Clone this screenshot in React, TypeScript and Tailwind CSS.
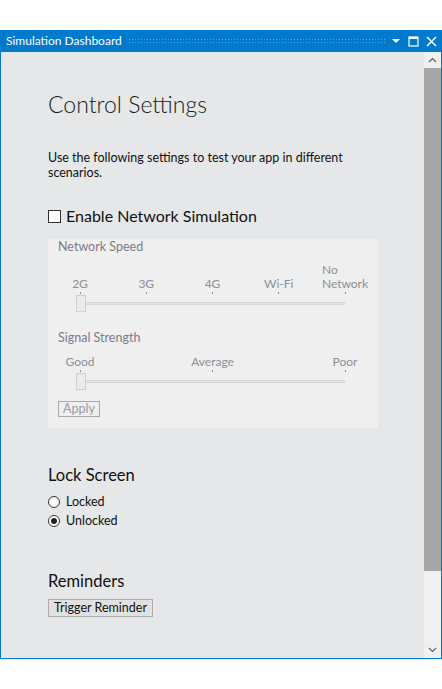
import React from 'react';

const font = { fontFamily: 'Lato, "Noto Sans", sans-serif' };

function TitleBar() {
  return (
    <div className="flex h-[22px] items-center bg-[#007acc] pl-[5px] pr-[4px] text-white">
      <span className="text-[12px] leading-none">Simulation Dashboard</span>
      <div className="mx-[6px] h-[6px] flex-1 bg-[radial-gradient(circle,#5aa9e6_0.7px,transparent_0.8px)] bg-[length:3px_3px]" />
      <div className="flex items-center gap-[7px]">
        <svg width="10" height="10" viewBox="0 0 10 10">
          <path d="M1 3h8L5 7z" fill="white" />
        </svg>
        <svg width="11" height="11" viewBox="0 0 11 11">
          <rect x="1" y="1" width="9" height="9" fill="none" stroke="white" strokeWidth="1.2" />
          <rect x="1" y="1" width="9" height="2" fill="white" />
        </svg>
        <svg width="11" height="11" viewBox="0 0 11 11">
          <path d="M1 1l9 9M10 1l-9 9" stroke="white" strokeWidth="1.5" />
        </svg>
      </div>
    </div>
  );
}

function Slider({ labels }: { labels: React.ReactNode[] }) {
  return (
    <div className="ml-[22px] w-[265px]">
      <div className="flex items-end justify-between">
        {labels.map((l, i) => (
          <div key={i} className="flex w-0 flex-col items-center">
            <div className="whitespace-nowrap text-[12px] leading-[14px] text-[#8e8e98]">{l}</div>
            <div className="mt-[1px] h-[2px] w-[1px] bg-[#8e8e98]" />
          </div>
        ))}
      </div>
      <div className="relative mt-[8px] h-[3px] border border-[#d8d8d8] bg-[#e4e4e4]">
        <div className="absolute left-[-5px] top-[-8px] h-[17px] w-[10px] border border-[#cfcfcf] bg-[#ebebeb]" />
      </div>
    </div>
  );
}

function Scrollbar() {
  return (
    <div className="flex w-[17px] flex-col bg-[#f0f0f0]">
      <div className="flex h-[16px] items-center justify-center">
        <svg width="9" height="6" viewBox="0 0 9 6">
          <path d="M1 5l3.5-3.5L8 5" fill="none" stroke="#606060" strokeWidth="1.2" />
        </svg>
      </div>
      <div className="h-[503px] bg-[#a6a6a6]" />
      <div className="flex-1" />
      <div className="flex h-[16px] items-center justify-center">
        <svg width="9" height="6" viewBox="0 0 9 6">
          <path d="M1 1l3.5 3.5L8 1" fill="none" stroke="#606060" strokeWidth="1.2" />
        </svg>
      </div>
    </div>
  );
}

export default function App() {
  return (
    <div className="h-[689px] w-[442px] bg-white" style={font}>
      <div className="h-[30px]" />
      <div className="flex h-[629px] flex-col border-x border-b border-[#007acc]">
        <TitleBar />
        <div className="flex flex-1 overflow-hidden">
          <div className="flex-1 bg-[#e6e7e8] pl-[47px] text-[#111]">
            {/* Header */}
            <h1 className="mt-[36px] text-[23px] font-light leading-[32px] text-[#1a1a1a]">Control Settings</h1>
            <p className="mt-[30px] w-[300px] text-[12.5px] leading-[15px]">
              Use the following settings to test your app in different scenarios.
            </p>

            {/* Network simulation */}
            <label className="mt-[26px] flex items-center gap-[5px]">
              <span className="h-[13px] w-[13px] border border-[#333] bg-white" />
              <span className="text-[16px] leading-[20px]">Enable Network Simulation</span>
            </label>
            <div className="mt-[13px] h-[189px] w-[330px] bg-[#efefef] pl-[10px]">
              <div className="text-[12.5px] leading-[16px] text-[#7c7c88]">Network Speed</div>
              <div className="mt-[8px]">
                <Slider
                  labels={[
                    '2G',
                    '3G',
                    '4G',
                    'Wi-Fi',
                    <div key="nn" className="text-left">
                      No
                      <br />
                      Network
                    </div>,
                  ]}
                />
              </div>
              <div className="mt-[25px] text-[12.5px] leading-[16px] text-[#7c7c88]">Signal Strength</div>
              <div className="mt-[9px]">
                <Slider labels={['Good', 'Average', 'Poor']} />
              </div>
              <button className="mt-[18px] border border-[#a8a8a8] px-[4px] text-[12.5px] leading-[14px] text-[#9a9aa4]">
                Apply
              </button>
            </div>

            {/* Lock screen */}
            <h2 className="mt-[37px] text-[16.5px] leading-[20px]">Lock Screen</h2>
            <div className="mt-[9px] flex flex-col gap-[3px] text-[12.5px]">
              <div className="flex items-center gap-[6px] leading-[16px]">
                <span className="h-[12px] w-[12px] rounded-full border border-[#333] bg-white" />
                Locked
              </div>
              <div className="flex items-center gap-[6px] leading-[16px]">
                <span className="flex h-[12px] w-[12px] items-center justify-center rounded-full border border-[#333] bg-white">
                  <span className="h-[6px] w-[6px] rounded-full bg-[#222]" />
                </span>
                Unlocked
              </div>
            </div>

            {/* Reminders */}
            <h2 className="mt-[42px] text-[16.5px] leading-[20px]">Reminders</h2>
            <button className="mt-[8px] border border-[#adadad] bg-[#e1e1e1] px-[5px] text-[12.5px] leading-[16px]">
              Trigger Reminder
            </button>
          </div>
          <Scrollbar />
        </div>
      </div>
    </div>
  );
}
